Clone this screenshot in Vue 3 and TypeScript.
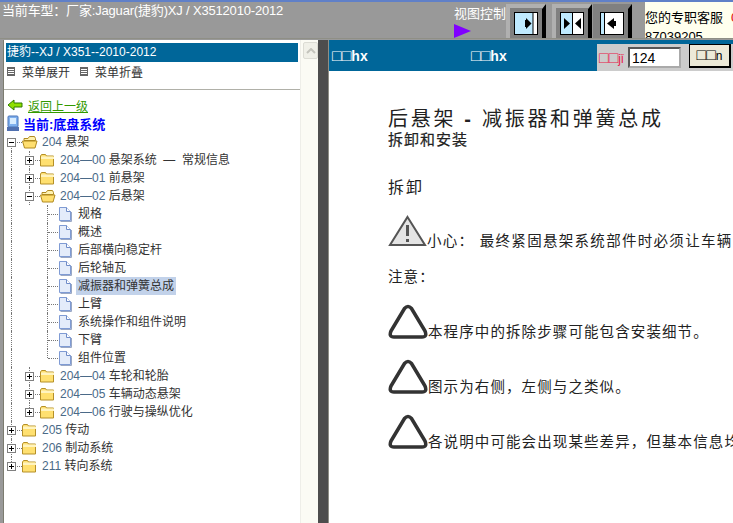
<script setup lang="ts">
interface TreeRow {
  label: string
  num?: string
  kind: 'plus' | 'minus' | 'doc'
  // which ancestor guide lines carry on through this row
  guides: boolean[]
  last?: boolean
  selected?: boolean
}

const docs = ['规格', '概述', '后部横向稳定杆', '后轮轴瓦', '减振器和弹簧总成', '上臂', '系统操作和组件说明', '下臂', '组件位置']

const rows: TreeRow[] = [
  { num: '204', label: '悬架', kind: 'minus', guides: [] },
  { num: '204—00', label: '悬架系统\u00a0\u00a0—\u00a0\u00a0常规信息', kind: 'plus', guides: [true] },
  { num: '204—01', label: '前悬架', kind: 'plus', guides: [true] },
  { num: '204—02', label: '后悬架', kind: 'minus', guides: [true] },
  ...docs.map((label, i): TreeRow => ({
    label,
    kind: 'doc',
    guides: [true, true],
    last: i === docs.length - 1,
    selected: label === '减振器和弹簧总成',
  })),
  { num: '204—04', label: '车轮和轮胎', kind: 'plus', guides: [true] },
  { num: '204—05', label: '车辆动态悬架', kind: 'plus', guides: [true] },
  { num: '204—06', label: '行驶与操纵优化', kind: 'plus', guides: [true], last: true },
  { num: '205', label: '传动', kind: 'plus', guides: [] },
  { num: '206', label: '制动系统', kind: 'plus', guides: [] },
  { num: '211', label: '转向系统', kind: 'plus', guides: [], last: true },
]

const notes = ['本程序中的拆除步骤可能包含安装细节。', '图示为右侧，左侧与之类似。', '各说明中可能会出现某些差异，但基本信息均相同。']
</script>

<template>
  <div class="page">
    <header class="topbar">
      <div class="car">当前车型：厂家:Jaguar(捷豹)XJ / X3512010-2012</div>
      <div class="view">
        <span>视图控制</span>
        <svg width="18" height="14" viewBox="0 0 18 14"><polygon points="0,0 17,7 0,14" fill="#8000ff" /></svg>
      </div>
      <div class="view-btn">
        <svg width="40" height="34" viewBox="0 0 40 34">
          <rect width="40" height="34" fill="#b0b0b0" />
          <rect x="4" y="4" width="32" height="30" fill="#808080" />
          <polygon points="36,5 40,0 40,34 36,34" fill="#000" />
          <rect x="8.5" y="8.5" width="23" height="22" fill="#bfeaff" stroke="#000" />
          <rect x="27" y="9" width="4" height="21" fill="#fff" />
          <line x1="27" y1="9" x2="27" y2="30" stroke="#000" />
          <polygon points="25.5,19.5 20,14 20,25" fill="#000" />
          <rect x="19" y="16" width="2" height="7" fill="#000" />
        </svg>
      </div>
      <div class="view-btn second">
        <svg width="40" height="34" viewBox="0 0 40 34">
          <rect width="40" height="34" fill="#b0b0b0" />
          <rect x="4" y="4" width="32" height="30" fill="#808080" />
          <polygon points="36,5 40,0 40,34 36,34" fill="#000" />
          <rect x="8.5" y="8.5" width="23" height="22" fill="#fff" stroke="#000" />
          <rect x="9" y="9" width="11" height="21" fill="#bfeaff" />
          <line x1="20.5" y1="9" x2="20.5" y2="30" stroke="#000" />
          <polygon points="18,19.5 12,14 12,25" fill="#000" />
          <polygon points="23,19.5 29,14 29,25" fill="#000" />
        </svg>
      </div>
      <div class="view-btn third">
        <svg width="39" height="34" viewBox="0 0 39 34">
          <rect width="39" height="34" fill="#808080" />
          <polygon points="35,5 39,0 39,34 35,34" fill="#000" />
          <rect x="7.5" y="8.5" width="23" height="22" fill="#fff" stroke="#000" />
          <rect x="8" y="9" width="3" height="21" fill="#bfeaff" />
          <line x1="11.5" y1="9" x2="11.5" y2="30" stroke="#000" />
          <polygon points="14,19.5 21,14 21,25" fill="#000" />
          <rect x="20" y="17" width="3" height="5" fill="#000" />
        </svg>
      </div>
      <div class="service">
        <div class="service-line">您的专职客服<em>0</em></div>
        <div class="service-line">87039205</div>
      </div>
    </header>

    <div class="frames">
      <aside class="left">
        <div class="left-inner">
          <div class="model">捷豹--XJ / X351--2010-2012</div>
          <div class="menu">
            <span class="menu-item"><i class="menu-icon"></i>菜单展开</span>
            <span class="menu-item"><i class="menu-icon"></i>菜单折叠</span>
          </div>
          <a class="back">
            <svg width="16" height="12" viewBox="0 0 16 12">
              <polygon points="1,6 7,1 7,4 15,4 15,8 7,8 7,11" fill="#8fe000" stroke="#2f7a00" />
            </svg>
            <span>返回上一级</span>
          </a>
          <div class="current">
            <svg width="14" height="17" viewBox="0 0 14 17">
              <rect x="2" y="1" width="10" height="11" rx="1" fill="#7fb0ee" stroke="#4a74b8" />
              <rect x="4" y="3" width="6" height="6" fill="#d8ecff" />
              <rect x="1" y="12" width="12" height="4" fill="#5070b0" />
            </svg>
            <span>当前:底盘系统</span>
          </div>
          <div class="tree">
            <div v-for="row in rows" :key="row.label" class="row">
              <span v-for="(g, i) in row.guides" :key="i" class="cell" :class="{ vline: g && !(row.kind === 'doc' && i === 1) }"></span>
              <template v-if="row.kind === 'doc'">
                <span class="cell vbranch" :class="{ 'vbranch--last': row.last }"></span>
                <span class="icon-cell">
                  <svg width="14" height="16" viewBox="0 0 14 16">
                    <path d="M1.5 1.5h7l4 4v9h-11z" fill="#e4ecfa" stroke="#7f9bd4" />
                    <path d="M8.5 1.5v4h4" fill="#fff" stroke="#6f8cc8" />
                    <path d="M13.500 6v9.500H2.500" fill="none" stroke="#9aa8c4" />
                  </svg>
                </span>
              </template>
              <template v-else>
                <span class="cell tee" :class="{ 'tee--last': row.last, 'tee--first': row.guides.length === 0 && row.num === '204' }">
                  <i class="box">
                    <i class="box-h"></i>
                    <i v-if="row.kind === 'plus'" class="box-v"></i>
                  </i>
                </span>
                <span class="icon-cell">
                  <svg v-if="row.kind === 'minus'" width="16" height="14" viewBox="0 0 16 14">
                    <path d="M2 3.500h4l1.500-2h5l1 2v2H2z" fill="#fff2b0" stroke="#b08a20" />
                    <path d="M.5 6h13l1.500 0-2 7H2.500z" fill="#ffdf70" stroke="#b08a20" />
                  </svg>
                  <svg v-else width="15" height="14" viewBox="0 0 15 14">
                    <path d="M.5 3l1-1.500h4l1 1.500h7v10h-13z" fill="#ffe070" stroke="#b59028" />
                    <rect x="1" y="3.500" width="13" height="2.500" fill="#fff4c0" />
                  </svg>
                </span>
              </template>
              <span class="label" :class="{ 'label--selected': row.selected }"><span v-if="row.num" class="num">{{ row.num }}&nbsp;</span>{{ row.label }}</span>
            </div>
          </div>
        </div>
        <div class="scrollbar">
          <div class="scroll-btn">
            <svg width="10" height="6" viewBox="0 0 10 6"><path d="M1 5l4-4 4 4" fill="none" stroke="#c4c4bc" stroke-width="2" /></svg>
          </div>
        </div>
      </aside>

      <div class="split"></div>

      <main class="right">
        <div class="right-head">
          <b class="head-a"><span class="tofu">□□</span>hx</b>
          <b class="head-b"><span class="tofu">□□</span>hx</b>
          <div class="pager">
            <span class="pager-label"><span class="tofu">□□</span>jǐ</span>
            <input class="pager-input" value="124" />
            <button class="pager-btn"><span class="tofu">□□</span>n</button>
          </div>
        </div>
        <div class="doc">
          <h1>后悬架 <b>-</b> 减振器和弹簧总成</h1>
          <h2>拆卸和安装</h2>
          <h3>拆卸</h3>
          <div class="line caution">
            <svg width="39" height="32" viewBox="0 0 39 32">
              <path d="M19.500 2L37 30H2z" fill="#e4e4e4" stroke="#555" stroke-width="2" />
              <rect x="18" y="10" width="3" height="11" fill="#555" />
              <rect x="18" y="24" width="3" height="3" fill="#555" />
            </svg>
            <span>小心：&nbsp;最终紧固悬架系统部件时必须让车辆</span>
          </div>
          <p class="zhuyi">注意：</p>
          <div v-for="n in notes" :key="n" class="line note">
            <svg width="40" height="35" viewBox="0 0 40 35">
              <path d="M16.500 4.500Q20 .5 23.500 4.500L37 27Q39.500 33 34 33H6Q.5 33 3 27z" fill="#fff" stroke="#333" stroke-width="3.500" stroke-linejoin="round" />
            </svg>
            <span>{{ n }}</span>
          </div>
        </div>
      </main>
    </div>
  </div>
</template>

<style scoped>
.page {
  width: 733px;
  height: 523px;
  overflow: hidden;
  display: flex;
  flex-direction: column;
  background: #999;
  font-family: "Liberation Sans", "Noto Sans CJK SC", sans-serif;
  font-size: 12px;
}

/* top bar */
.topbar {
  height: 38px;
  flex-shrink: 0;
  box-sizing: border-box;
  border-top: 2px solid #6080c8;
  display: flex;
  align-items: flex-end;
  background: #999;
  color: #fff;
}
.car {
  width: 454px;
  align-self: flex-start;
  padding-left: 2px;
  box-sizing: border-box;
  font-size: 13px;
  line-height: 18px;
  letter-spacing: -0.18px;
  white-space: nowrap;
}
.view {
  width: 52px;
  display: flex;
  flex-direction: column;
  font-size: 13px;
  line-height: 18px;
  white-space: nowrap;
  gap: 1px;
}
.view svg { display: block; }
.view-btn { height: 34px; }
.view-btn svg { display: block; }
.second { margin-left: 6px; }
.third { margin-left: 1px; }
.service {
  margin-left: 13px;
  align-self: stretch;
  flex: 1;
  background: #ffffee;
  color: #000;
  font-size: 13px;
  line-height: 19px;
  overflow: hidden;
  white-space: nowrap;
  padding-top: 6px;
}
.service-line em { color: #e00000; font-style: normal; margin-left: 8px; }

/* frames */
.frames { flex: 1; display: flex; min-height: 0; border-top: 1px solid #8f8f86; }

.left {
  width: 314px;
  margin-left: 3px;
  margin-top: 1px;
  display: flex;
  border-left: 1px solid #7c7c70;
  flex-shrink: 0;
  background: #fff;
}
.left-inner { width: 296px; flex-shrink: 0; padding-top: 3px; }
.model {
  margin: 0 2px;
  height: 19px;
  line-height: 19px;
  padding-left: 1px;
  background: #006699;
  color: #fff;
  font-size: 12px;
}
.menu {
  height: 28px;
  box-sizing: border-box;
  padding: 0 0 9px 3px;
  display: flex;
  align-items: center;
  color: #333;
  border-bottom: 1px solid #b0b0a8;
}
.menu-item { display: flex; align-items: center; width: 73px; }
.menu-icon {
  width: 6px;
  height: 7px;
  margin-right: 7px;
  border: 1px solid #666;
  background: repeating-linear-gradient(#666 0 1px, #fff 1px 2px);
}
.back {
  height: 18px;
  margin-top: 6px;
  padding-left: 3px;
  display: flex;
  align-items: center;
  gap: 5px;
  color: #339900;
  text-decoration: underline;
}
.current {
  height: 18px;
  padding-left: 2px;
  display: flex;
  align-items: center;
  gap: 3px;
  color: #0000ff;
  font-size: 13px;
  font-weight: 700;
}
.tree { margin-top: 1px; }
.row { height: 18px; display: flex; align-items: stretch; color: #333; white-space: nowrap; }
.cell { width: 18px; flex-shrink: 0; position: relative; }
.icon-cell { width: 18px; flex-shrink: 0; display: flex; align-items: center; justify-content: flex-start; }
.vline::before, .tee::before, .vbranch::before {
  content: "";
  position: absolute;
  left: 7px;
  top: 0;
  bottom: 0;
  border-left: 1px dotted #777;
}
.vbranch::after, .tee::after {
  content: "";
  position: absolute;
  left: 8px;
  right: 0;
  top: 9px;
  border-top: 1px dotted #777;
}
.vbranch--last::before, .tee--last::before { bottom: 9px; }
.tee--first::before { top: 9px; }
.box {
  position: absolute;
  left: 3px;
  top: 5px;
  width: 9px;
  height: 9px;
  box-sizing: border-box;
  border: 1px solid #808080;
  background: #fff;
  z-index: 1;
}
.box-h { position: absolute; left: 1px; top: 3px; width: 5px; height: 1px; background: #000; }
.box-v { position: absolute; left: 3px; top: 1px; width: 1px; height: 5px; background: #000; }
.label { line-height: 18px; height: 18px; padding: 0 2px; }
.label--selected { background: #c2d2ea; }
.num { color: #4a6a88; }

.scrollbar {
  flex: 1;
  background: #fbfbf4;
  border-left: 1px solid #eeeee8;
  padding: 2px 0 0 2px;
}
.scroll-btn {
  width: 13px;
  height: 15px;
  border: 1px solid #dcdcd4;
  border-radius: 2px;
  background: #f0f0e8;
  display: flex;
  align-items: center;
  justify-content: center;
}

.split { width: 10px; flex-shrink: 0; background: #4d4d4d; border-right: 1px solid #8f8f86; margin-top: 1px; }

.right { flex: 1; min-width: 0; display: flex; flex-direction: column; background: #fff; margin-top: 1px; overflow: hidden; }
.right-head {
  height: 31px;
  flex-shrink: 0;
  display: flex;
  align-items: center;
  background: #006699;
  color: #fff;
  font-size: 14px;
}
.tofu { font-size: 16px; font-weight: 400; }
.head-a { margin-left: 3px; width: 139px; }
.head-b { width: 126px; }
.pager {
  align-self: flex-end;
  width: 136px;
  height: 27px;
  background: #cccccc;
  display: flex;
  align-items: center;
}
.pager-label { color: #e8204a; margin-left: 2px; width: 29px; font-size: 12px; white-space: nowrap; }
.pager-input {
  width: 53px;
  height: 21px;
  box-sizing: border-box;
  border: 2px inset #aaa;
  background: #fff;
  font: 14px "Liberation Sans", sans-serif;
  padding: 0 2px;
  color: #000;
}
.pager-btn {
  margin-left: 8px;
  width: 42px;
  height: 24px;
  align-self: flex-start;
  box-sizing: border-box;
  border: 1px solid #000;
  border-right-width: 2px;
  border-bottom-width: 2px;
  background: #ece9d8;
  color: #000;
  font: 12px "Liberation Sans", sans-serif;
  line-height: 16px;
  padding: 0;
}

.doc { padding: 35px 0 0 59px; color: #222; white-space: nowrap; }
h1 { margin: 0; font-size: 20px; font-weight: 400; line-height: 26px; letter-spacing: 2.700px; }
h2 { margin: 0; font-size: 15px; font-weight: 400; line-height: 16px; letter-spacing: 1px; -webkit-text-stroke: 0.2px #222; }
h3 { margin: 28px 0 0; font-size: 16px; font-weight: 400; line-height: 24px; letter-spacing: 2px; }
.line { display: flex; align-items: flex-end; font-size: 14.500px; letter-spacing: 1.100px; }
.line span { line-height: 19px; }
.line svg { flex-shrink: 0; display: block; }
.caution { margin-top: 15px; height: 32px; letter-spacing: 1.300px; }
.caution span { margin-bottom: -4px; }
.zhuyi { margin: 20px 0 0; font-size: 14.500px; line-height: 20px; letter-spacing: 1.100px; }
.note { margin-top: 17px; height: 35px; margin-bottom: 20px; }
.note + .note { margin-top: 0; }
.note span { margin-bottom: -3px; }
</style>

<style>
html, body { margin: 0; padding: 0; }
</style>
